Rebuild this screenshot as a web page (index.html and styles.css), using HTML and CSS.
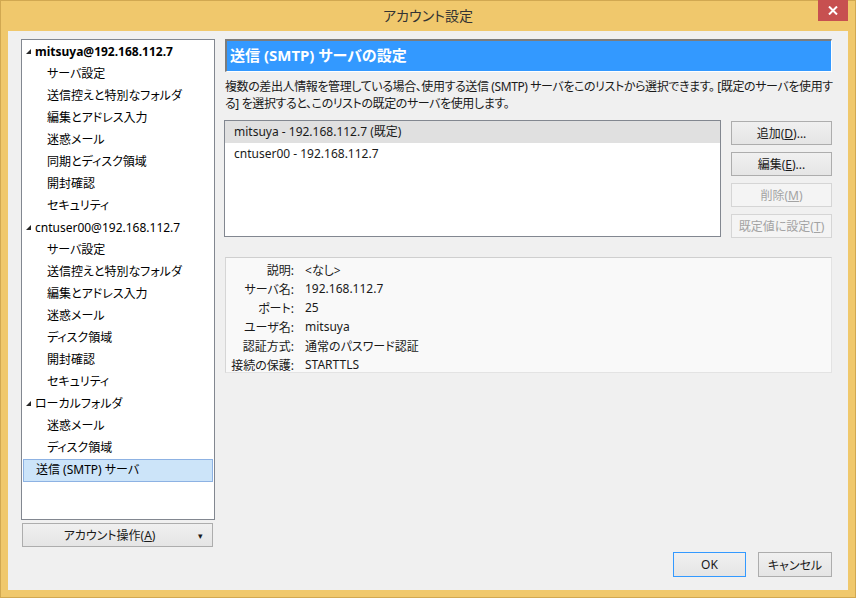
FILE: index.html
```html
<!DOCTYPE html>
<html lang="ja">
<head>
    <meta charset="UTF-8">
    <title>アカウント設定</title>
    <link rel="stylesheet" href="styles.css">
</head>
<body>
    <div class="window">
        <div class="titlebar">
            <span class="title">アカウント設定</span>
            <div class="close">
                <svg width="10" height="9" viewBox="0 0 10 9"><path d="M1 0.5 L9 8.5 M9 0.5 L1 8.5" stroke="#fff" stroke-width="2"/></svg>
            </div>
        </div>
        <div class="client">
            <div class="main">
                <div class="leftcol">
                    <ul class="tree">
                        <li class="top bold"><span class="tri"></span>mitsuya@192.168.112.7</li>
                        <li class="child">サーバ設定</li>
                        <li class="child">送信控えと特別なフォルダ</li>
                        <li class="child">編集とアドレス入力</li>
                        <li class="child">迷惑メール</li>
                        <li class="child">同期とディスク領域</li>
                        <li class="child">開封確認</li>
                        <li class="child">セキュリティ</li>
                        <li class="top"><span class="tri"></span>cntuser00@192.168.112.7</li>
                        <li class="child">サーバ設定</li>
                        <li class="child">送信控えと特別なフォルダ</li>
                        <li class="child">編集とアドレス入力</li>
                        <li class="child">迷惑メール</li>
                        <li class="child">ディスク領域</li>
                        <li class="child">開封確認</li>
                        <li class="child">セキュリティ</li>
                        <li class="top"><span class="tri"></span>ローカルフォルダ</li>
                        <li class="child">迷惑メール</li>
                        <li class="child">ディスク領域</li>
                        <li class="top selected">送信 (SMTP) サーバ</li>
                    </ul>
                    <div class="btn account">
                        <span class="label">アカウント操作(<u>A</u>)</span>
                        <span class="arrow">▾</span>
                    </div>
                </div>
                <div class="rightcol">
                    <div class="header">送信 (SMTP) サーバの設定</div>
                    <p class="desc">複数の差出人情報を管理している場合、使用する送信 (SMTP) サーバをこのリストから選択できます。 [既定のサーバを使用す<br>る] を選択すると、このリストの既定のサーバを使用します。</p>
                    <div class="servers">
                        <ul class="list">
                            <li class="current">mitsuya - 192.168.112.7 (既定)</li>
                            <li>cntuser00 - 192.168.112.7</li>
                        </ul>
                        <div class="side">
                            <div class="btn">追加(<u>D</u>)...</div>
                            <div class="btn">編集(<u>E</u>)...</div>
                            <div class="btn disabled">削除(<u>M</u>)</div>
                            <div class="btn disabled">既定値に設定(<u>T</u>)</div>
                        </div>
                    </div>
                    <div class="details">
                        <span class="key">説明:</span><span>&lt;なし&gt;</span>
                        <span class="key">サーバ名:</span><span>192.168.112.7</span>
                        <span class="key">ポート:</span><span>25</span>
                        <span class="key">ユーザ名:</span><span>mitsuya</span>
                        <span class="key">認証方式:</span><span>通常のパスワード認証</span>
                        <span class="key">接続の保護:</span><span>STARTTLS</span>
                    </div>
                </div>
            </div>
            <div class="footer">
                <div class="btn ok">OK</div>
                <div class="btn cancel">キャンセル</div>
            </div>
        </div>
    </div>
</body>
</html>
```

FILE: styles.css
```css
body{
    margin: 0;
    font-family: "Noto Sans", "Noto Sans CJK JP", sans-serif;
    font-size: 12px;
    color: #1a1a1a;
    font-feature-settings: "palt";
}
ul{
    list-style: none;
    margin: 0;
    padding: 0;
}
.window{
    width: 856px;
    height: 598px;
    box-sizing: border-box;
    background-color: #F0C86C;
    border: 1px solid #D1A851;
    display: flex;
    flex-direction: column;
}
.titlebar{
    position: relative;
    height: 30px;
    display: flex;
    justify-content: center;
    align-items: center;
}
.title{
    font-family: "Noto Sans CJK JP", sans-serif;
    font-size: 14px;
    color: #333;
    padding-bottom: 2px;
}
.close{
    position: absolute;
    top: -1px;
    right: 7px;
    width: 30px;
    height: 21px;
    background-color: #C75050;
    display: flex;
    justify-content: center;
    align-items: center;
}
.client{
    flex: 1;
    margin: 0 7px 7px 7px;
    background-color: #F0F0F0;
    padding: 8px 16px 13px 13px;
    display: flex;
    flex-direction: column;
}
.main{
    flex: 1;
    display: grid;
    grid-template-columns: 194px 607px;
    column-gap: 10px;
}
.leftcol{
    display: flex;
    flex-direction: column;
}
.rightcol{
    min-width: 0;
}
.tree{
    height: 481px;
    box-sizing: border-box;
    background-color: #fff;
    border: 1px solid #828790;
    padding-top: 1px;
}
.tree li{
    height: 22px;
    line-height: 21px;
    white-space: nowrap;
    color: #000;
}
.tree .top{
    padding-left: 13px;
    position: relative;
}
.tree .bold{
    font-weight: bold;
}
.tree .child{
    padding-left: 25px;
}
.tri{
    position: absolute;
    left: 4px;
    top: 8px;
    width: 0;
    height: 0;
    border-left: 5px solid transparent;
    border-bottom: 5px solid #262626;
}
.tree .selected{
    margin: 0 1px;
    height: 21px;
    background-color: #CCE4F9;
    border: 1px solid #8DB2E3;
    padding-left: 12px;
    line-height: 20px;
}
.btn{
    height: 23px;
    box-sizing: border-box;
    border: 1px solid #ADADAD;
    background: linear-gradient(#F0F0F0, #E5E5E5);
    display: flex;
    justify-content: center;
    align-items: center;
    color: #1a1a1a;
    white-space: nowrap;
}
.btn.disabled{
    color: #A3A3A3;
    border-color: #D5D5D5;
    background: #F4F4F4;
}
.account{
    margin: 3px 2px 0 1px;
    height: 24px;
    padding-right: 8px;
}
.account .label{
    flex: 1;
    text-align: center;
}
.account .arrow{
    width: 8px;
    font-size: 9px;
    text-align: center;
}
.header{
    height: 33px;
    box-sizing: border-box;
    background-color: #3399FF;
    border-top: 2px solid #7C7C7C;
    border-left: 2px solid #7C7C7C;
    border-right: 1px solid #fff;
    border-bottom: 1px solid #fff;
    color: #fff;
    font-weight: bold;
    font-size: 15px;
    line-height: 29px;
    padding-left: 3px;
}
.desc{
    margin: 6px 0 0 0;
    line-height: 17px;
    white-space: nowrap;
    letter-spacing: -0.4px;
}
.servers{
    margin-top: 8px;
    display: flex;
    gap: 10px;
}
.list{
    width: 497px;
    height: 117px;
    box-sizing: border-box;
    margin-left: -1px;
    background-color: #fff;
    border: 1px solid #828790;
}
.list li{
    height: 22px;
    line-height: 22px;
    padding-left: 9px;
}
.list .current{
    background-color: #E0E0E0;
}
.side{
    flex: 1;
    display: flex;
    flex-direction: column;
    gap: 7px;
    padding-top: 1px;
}
.side .btn{
    height: 24px;
}
.details{
    margin-top: 19px;
    height: 116px;
    box-sizing: border-box;
    background-color: #F9F9F9;
    border: 1px solid #E3E3E3;
    border-top-color: #CFCFCF;
    border-left-color: #D6D6D6;
    padding-top: 2px;
    display: grid;
    grid-template-columns: 68px 1fr;
    column-gap: 11px;
    grid-auto-rows: 19px;
    align-items: center;
}
.details .key{
    text-align: right;
}
.footer{
    display: flex;
    justify-content: flex-end;
    gap: 12px;
}
.footer .btn{
    height: 25px;
}
.ok{
    width: 73px;
    border-color: #3399FF;
}
.cancel{
    width: 74px;
}
```
